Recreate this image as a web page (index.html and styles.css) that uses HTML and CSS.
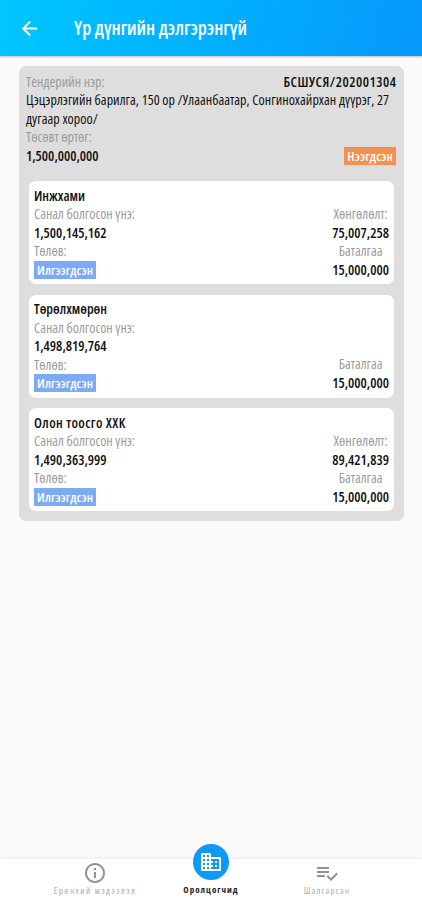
FILE: index.html
```
<!DOCTYPE html>
<html lang="mn">
<head>
    <meta charset="UTF-8">
    <meta name="viewport" content="width=device-width, initial-scale=1.0">
    <title>Үр дүнгийн дэлгэрэнгүй</title>
    <link rel="stylesheet" href="styles.css">
</head>
<body>

<header class="topbar">
    <svg class="back" viewBox="0 0 24 24"><path d="M20 11H7.83l5.59-5.59L12 4l-8 8 8 8 1.41-1.41L7.83 13H20v-2z"/></svg>
    <h1>Үр дүнгийн дэлгэрэнгүй</h1>
</header>

<main>
    <section class="tender">
        <div class="row">
            <span class="label">Тендерийн нэр:</span>
            <span class="code">БСШУСЯ/202001304</span>
        </div>
        <p class="name">Цэцэрлэгийн барилга, 150 ор /Улаанбаатар, Сонгинохайрхан дүүрэг, 27 дугаар хороо/</p>
        <div class="label">Төсөвт өртөг:</div>
        <div class="row">
            <span class="num">1,500,000,000</span>
            <span class="badge open">Нээгдсэн</span>
        </div>

        <article class="bid">
            <h2>Инжхами</h2>
            <div class="row">
                <div class="col">
                    <span class="label">Санал болгосон үнэ:</span>
                    <span class="num">1,500,145,162</span>
                    <span class="label">Төлөв:</span>
                    <span class="badge sent">Илгээгдсэн</span>
                </div>
                <div class="col right">
                    <span class="label">Хөнгөлөлт:</span>
                    <span class="num">75,007,258</span>
                    <span class="label">Баталгаа</span>
                    <span class="num">15,000,000</span>
                </div>
            </div>
        </article>

        <article class="bid">
            <h2>Төрөлхмөрөн</h2>
            <div class="row">
                <div class="col">
                    <span class="label">Санал болгосон үнэ:</span>
                    <span class="num">1,498,819,764</span>
                    <span class="label">Төлөв:</span>
                    <span class="badge sent">Илгээгдсэн</span>
                </div>
                <div class="col right">
                    <span class="label">Баталгаа</span>
                    <span class="num">15,000,000</span>
                </div>
            </div>
        </article>

        <article class="bid">
            <h2 class="wide">Олон тоосго ХХК</h2>
            <div class="row">
                <div class="col">
                    <span class="label">Санал болгосон үнэ:</span>
                    <span class="num">1,490,363,999</span>
                    <span class="label">Төлөв:</span>
                    <span class="badge sent">Илгээгдсэн</span>
                </div>
                <div class="col right">
                    <span class="label">Хөнгөлөлт:</span>
                    <span class="num">89,421,839</span>
                    <span class="label">Баталгаа</span>
                    <span class="num">15,000,000</span>
                </div>
            </div>
        </article>
    </section>
</main>

<nav class="tabs">
    <a class="tab info">
        <svg viewBox="0 0 24 24"><path d="M11 7h2v2h-2zm0 4h2v6h-2zm1-9C6.48 2 2 6.48 2 12s4.48 10 10 10 10-4.48 10-10S17.52 2 12 2zm0 18c-4.41 0-8-3.59-8-8s3.59-8 8-8 8 3.59 8 8-3.59 8-8 8z"/></svg>
        <span>Ерөнхий мэдээлэл</span>
    </a>
    <a class="tab active">
        <i class="bubble"><svg viewBox="0 0 24 24"><path d="M12 7V3H2v18h20V7H12zM6 19H4v-2h2v2zm0-4H4v-2h2v2zm0-4H4V9h2v2zm0-4H4V5h2v2zm4 12H8v-2h2v2zm0-4H8v-2h2v2zm0-4H8V9h2v2zm0-4H8V5h2v2zm10 12h-8v-2h2v-2h-2v-2h2v-2h-2V9h8v10zm-2-8h-2v2h2v-2zm0 4h-2v2h2v-2z"/></svg></i>
        <span>Оролцогчид</span>
    </a>
    <a class="tab chosen">
        <svg viewBox="0 0 24 24"><path d="M14 10H2v2h12v-2zm0-4H2v2h12V6zM2 16h8v-2H2v2zm19.500-4.500L23 13l-6.990 7-4.510-4.500L13 14l3.010 3 5.490-5.500z"/></svg>
        <span>Шалгарсан</span>
    </a>
</nav>

</body>
</html>
```
FILE: styles.css
```
* {
    box-sizing: border-box;
}
body {
    display: flex;
    flex-direction: column;
    height: 900px;
    margin: 0;
    overflow: hidden;
    background: #fafafa;
    font-family: "Open Sans", "Noto Sans", sans-serif;
    font-stretch: 75%;
    font-size: 14px;
    line-height: 18.5px;
    color: #111;
}
.topbar {
    display: flex;
    align-items: center;
    height: 56px;
    padding-left: 18px;
    background: linear-gradient(100deg, #00c6ff 0%, #00b2ff 45%, #0798fb 100%);
    box-shadow: 0 1px 2px rgba(0, 0, 0, 0.25);
}
.back {
    width: 23px;
    height: 23px;
    fill: #fff;
}
h1 {
    margin: 0 0 0 33px;
    font-size: 19px;
    font-weight: 600;
    color: #fff;
}
main {
    flex: 1;
    padding: 10px 18px 0 19px;
}
.tender {
    height: 455px;
    padding: 6.5px 8px 0 7px;
    border-radius: 7px;
    background: #dedede;
}
.row {
    display: flex;
    justify-content: space-between;
}
.label {
    color: #9b9b9b;
}
.name {
    margin: 0;
    font-weight: 500;
    letter-spacing: 0.05px;
}
.code, .num {
    font-weight: 600;
}
.code {
    letter-spacing: 0.5px;
    margin-right: -0.5px;
}
.badge {
    height: 18px;
    padding: 0 3px;
    font-size: 13px;
    font-weight: 600;
    line-height: 18px;
    color: #fff;
}
.open {
    letter-spacing: 0.2px;
    background: #f39150;
}
.sent {
    letter-spacing: 0.1px;
    background: #7da9f5;
}
.bid {
    height: 103px;
    margin: 0 2px 10.6px 3px;
    padding: 5.8px 5px 0;
    border-radius: 7px;
    background: #fff;
}
.row + .bid {
    margin-top: 16px;
}
h2 {
    margin: 0;
    font-size: 14px;
    font-weight: 600;
}
.wide {
    letter-spacing: 0.4px;
}
.col {
    display: flex;
    flex-direction: column;
    align-items: flex-start;
}
.right {
    justify-content: flex-end;
    align-items: center;
}
.tabs {
    display: flex;
    height: 41px;
    padding: 0 37px;
    background: #fff;
    box-shadow: 0 -1px 3px rgba(0, 0, 0, 0.06);
    font-size: 9px;
    line-height: 12px;
    letter-spacing: 1.2px;
}
.tab {
    display: flex;
    flex: 1;
    flex-direction: column;
    align-items: center;
    padding-top: 2px;
    color: #aaa;
    white-space: nowrap;
}
.tab svg {
    width: 24px;
    height: 24px;
    fill: #929292;
}
.info {
    letter-spacing: 1.5px;
}
.active {
    margin-top: -15px;
    padding-top: 0;
    font-weight: 700;
    letter-spacing: 1px;
    color: #222;
}
.bubble {
    display: flex;
    align-items: center;
    justify-content: center;
    width: 36px;
    height: 36px;
    margin-bottom: 4px;
    border-radius: 50%;
    background: #0d99f7;
}
.active .bubble svg {
    fill: #fff;
}
```
